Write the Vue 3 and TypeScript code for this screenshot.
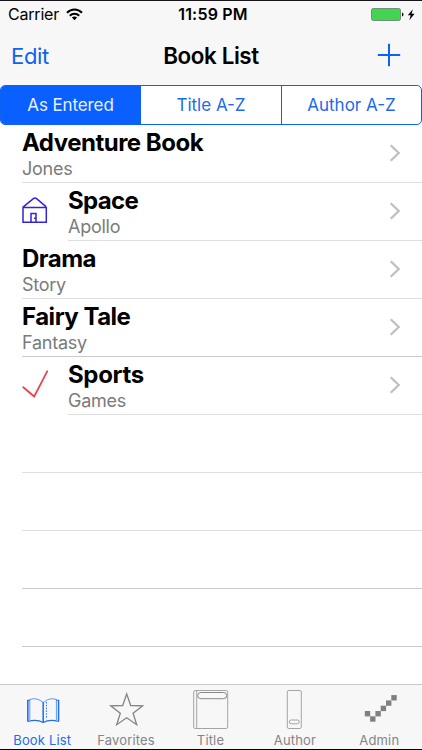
<script setup lang="ts">
import { ref } from 'vue'

interface Book {
  title: string
  author: string
  icon?: 'house' | 'check'
  cls: string
}

const sorts = ['As Entered', 'Title A-Z', 'Author A-Z']
const activeSort = ref(0)

const books: Book[] = [
  { title: 'Adventure Book', author: 'Jones', cls: 'adventure' },
  { title: 'Space', author: 'Apollo', icon: 'house', cls: 'space' },
  { title: 'Drama', author: 'Story', cls: 'drama' },
  { title: 'Fairy Tale', author: 'Fantasy', cls: 'strong' },
  { title: 'Sports', author: 'Games', icon: 'check', cls: 'sports' },
]
const emptyRows = 5

const tabs = ['Book List', 'Favorites', 'Title', 'Author', 'Admin']
const activeTab = ref(0)

const pixels = [
  [26.8, 26], [32.1, 31.3], [37.4, 26], [42.7, 20.7], [48, 15.4], [53.3, 10.1],
]
</script>

<template>
  <div class="screen">
    <header class="top">
      <div class="status">
        <div class="carrier">
          <span>Carrier</span>
          <svg width="17" height="13" viewBox="0 0 17 13" fill="none" stroke="#000" stroke-width="2">
            <path d="M1 4.8C5.2 .5 11.8 .5 16 4.8M3.8 7.7C6.3 5.2 10.7 5.2 13.2 7.7" />
            <path d="M5.9 9.5C7.4 8.1 9.6 8.1 11.1 9.5L8.5 12.2Z" fill="#000" stroke="none" />
          </svg>
        </div>
        <div class="clock">11:59 PM</div>
        <div class="power">
          <svg width="45" height="16" viewBox="0 0 45 16">
            <rect x=".5" y="1.5" width="29" height="12" rx="1.8" fill="#43d551" stroke="#70907a" />
            <path d="M31 5.5Q32.5 5.8 32.5 7.5T31 9.5Z" fill="#000" />
            <path d="M41.8 2.2L36.8 8.2H39.7L38.3 13.3L43.6 6.8H40.6Z" fill="#000" />
          </svg>
        </div>
      </div>
      <nav class="nav">
        <button class="edit">Edit</button>
        <h1>Book List</h1>
        <button class="add" aria-label="Add">
          <svg width="24" height="24" viewBox="0 0 24 24"><path d="M12 .8V23.2M.8 12H23.2" stroke="#0b62f5" stroke-width="2" /></svg>
        </button>
      </nav>
    </header>

    <div class="segments">
      <button v-for="(s, i) in sorts" :key="s" :class="{ on: i === activeSort }" @click="activeSort = i">{{ s }}</button>
    </div>

    <ul class="list">
      <li v-for="b in books" :key="b.title" :class="['row', b.cls]">
        <div v-if="b.icon" class="thumb">
          <svg v-if="b.icon === 'house'" width="27" height="27" viewBox="0 0 27 27" fill="none" stroke="#3024dc" stroke-width="1.5">
            <path d="M1 10.4H24.3V25.2H1ZM1 10.2L11.4 1.6Q13 .4 14.6 1.6L24 9.6M9 25.2V16.4H14V25.2M12 21.2H13.6" />
          </svg>
          <svg v-else width="27" height="29" viewBox="0 0 27 29" fill="none" stroke="#e94550" stroke-width="1.8" stroke-linecap="round">
            <path d="M1.3 17.2L12.2 26.5L25.2 1.3" />
          </svg>
        </div>
        <div class="cell">
          <div class="text">
            <strong>{{ b.title }}</strong>
            <span>{{ b.author }}</span>
          </div>
          <svg class="chevron" width="12" height="18" viewBox="0 0 12 18" fill="none" stroke="#c0c0c4" stroke-width="2.3">
            <path d="M1.7 1.2L9.7 9L1.7 16.8" />
          </svg>
        </div>
      </li>
      <li v-for="n in emptyRows" :key="n" :class="['row', { strong: n > 2 }]">
        <div v-if="n < emptyRows" class="cell"></div>
      </li>
    </ul>

    <footer class="tabs">
      <button v-for="(t, i) in tabs" :key="t" :class="{ on: i === activeTab }" @click="activeTab = i">
        <svg width="84" height="46" viewBox="0 0 84 46" fill="none" stroke="currentColor">
          <g v-if="i === 0" stroke-width="1.1">
            <path d="M29.8 15.2H27.7V36.5M56.4 15.2H58.6V36.5M27.7 36.6Q36 33.7 43.2 37.4Q50.2 33.7 58.6 36.6" />
            <path d="M43.2 37.5V17.5Q37 12 29.8 14.5V35M43.2 17.5Q49.8 12 56.4 14.5V35" stroke-width=".7" />
            <path d="M43.2 17V37.5M27.8 15V36M58.5 15V36" stroke-width="1.3" />
            <path d="M46.4 17V34" stroke-dasharray="1.5 1.3" stroke-width="1" />
          </g>
          <path v-else-if="i === 1" d="M41.7 9L45.7 20.5L57.7 20.8L48.1 28.2L51.7 39.7L41.7 32.8L31.7 39.7L35.3 28.2L25.7 20.8L37.7 20.5Z" stroke-width="1.3" />
          <g v-else-if="i === 2" stroke="#a4a4a4" stroke-width="1">
            <rect x="24.7" y="5.5" width="34" height="38" rx="1.5" />
            <path d="M27.7 5.5V43.5" />
            <rect x="28.7" y="7.5" width="29" height="6.2" rx="3.1" stroke="#888" />
          </g>
          <g v-else-if="i === 3" stroke="#a4a4a4" stroke-width="1">
            <rect x="34.3" y="5.5" width="14" height="38" rx="1.5" />
            <rect x="36.3" y="35" width="10" height="3.8" rx="1.9" />
          </g>
          <g v-else stroke="none" fill="#808080">
            <rect v-for="(p, k) in pixels" :key="k" :x="p[0]" :y="p[1]" width="5.4" height="5.4" />
          </g>
        </svg>
        <span>{{ t }}</span>
      </button>
    </footer>
  </div>
</template>

<style>
body { margin: 0; background: #fff; }
</style>

<style scoped>
.screen {
  box-sizing: border-box;
  width: 422px;
  height: 750px;
  display: flex;
  flex-direction: column;
  overflow: hidden;
  background: #fff;
  color: #000;
  border-top: 1px solid #17131a;
  border-bottom: 1px solid #000;
  font-family: Inter, "Liberation Sans", sans-serif;
}
button {
  appearance: none;
  border: 0;
  padding: 0;
  margin: 0;
  background: none;
  font: inherit;
  color: inherit;
}
svg { display: block; flex: none; }
.top { height: 84px; flex: none; background: #f7f7f7; }
.status {
  height: 27px;
  display: grid;
  grid-template-columns: 1fr 1fr 1fr;
  align-items: center;
  font-size: 16px;
  line-height: 27px;
}
.carrier { display: flex; align-items: center; gap: 7px; padding-left: 8px; }
.carrier span { letter-spacing: -0.2px; }
.clock { font-weight: 600; text-align: center; white-space: nowrap; padding-left: 4px; letter-spacing: 0.2px; }
.power { display: flex; justify-content: flex-end; padding-right: 6px; }
.nav {
  height: 55px;
  display: grid;
  grid-template-columns: 1fr 1fr 1fr;
  align-items: center;
}
.edit { font-size: 22px; color: #0b62f5; text-align: left; padding-left: 11px; letter-spacing: -0.3px; }
h1 { margin: 0; font-size: 22.4px; font-weight: 600; text-align: center; white-space: nowrap; letter-spacing: -0.4px; }
.add { display: flex; justify-content: flex-end; padding: 0 21px 2px 0; }
.segments {
  box-sizing: border-box;
  height: 40px;
  flex: none;
  display: grid;
  grid-template-columns: 139px 141px 1fr;
  border: 1.3px solid #0b62f5;
  border-radius: 5px;
  overflow: hidden;
  background: #fff;
}
.segments button { font-size: 17px; color: #1c6aea; border-left: 1px solid #0b62f5; }
.segments button:first-child { border-left: 0; }
.segments button.on { background: #0a60ff; color: #e8f0ff; letter-spacing: -0.1px; }
.list { list-style: none; margin: 0; padding: 0; flex: 1; min-height: 0; }
.row { height: 58px; display: flex; padding-left: 22px; }
.thumb { width: 46px; display: flex; align-items: center; padding-bottom: 3px; box-sizing: border-box; }
.cell {
  box-sizing: border-box;
  flex: 1;
  height: 58px;
  display: flex;
  justify-content: space-between;
  align-items: center;
  padding-right: 21px;
  border-bottom: 1px solid #e0e0e2;
}
.strong .cell { border-bottom-color: #cbcbcd; }
.chevron { margin-bottom: 2px; }
.text { display: flex; flex-direction: column; white-space: nowrap; padding-top: 1px; }
.text strong { font-size: 24px; line-height: 28px; font-weight: 700; letter-spacing: -0.5px; }
.text span { font-size: 18px; line-height: 23px; color: #7b7b7b; letter-spacing: -0.25px; }
.sports strong { letter-spacing: -0.35px; }
.space strong { letter-spacing: -0.65px; }
.tabs {
  box-sizing: border-box;
  height: 65px;
  flex: none;
  display: grid;
  grid-template-columns: repeat(5, 1fr);
  background: #f7f7f7;
  border-top: 1px solid #c8c8c8;
  color: #858585;
}
.tabs button { display: flex; flex-direction: column; align-items: center; }
.tabs button.on { color: #1f6cf0; }
.tabs span { font-size: 13px; line-height: 18px; letter-spacing: 0.15px; white-space: nowrap; }
.tabs button:not(.on) span { padding-right: 1px; }
</style>
